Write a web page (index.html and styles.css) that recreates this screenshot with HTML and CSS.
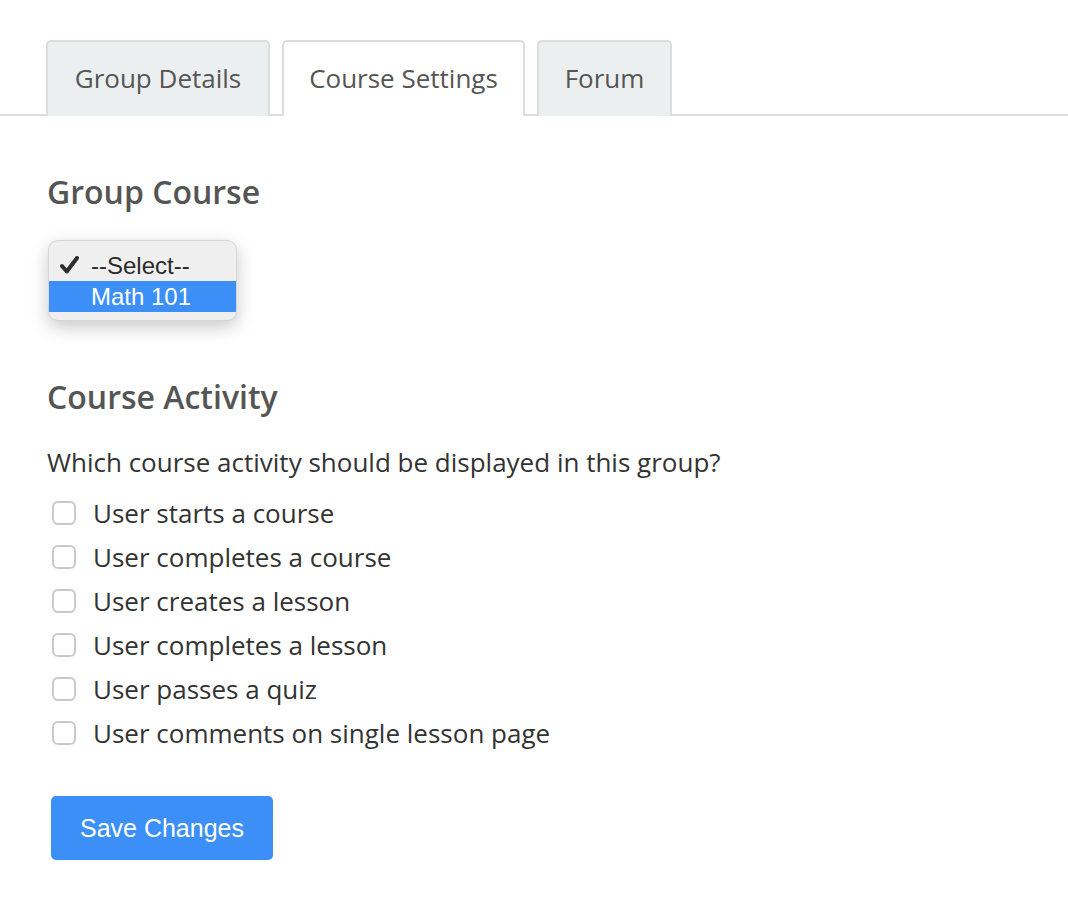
FILE: index.html
```html
<!DOCTYPE html>
<html lang="en">
<head>
<meta charset="utf-8">
<title>Course Settings</title>
<link rel="stylesheet" href="styles.css">
</head>
<body>
<nav class="tabs">
  <div class="tab tab-group">Group Details</div>
  <div class="tab tab-course active">Course Settings</div>
  <div class="tab tab-forum">Forum</div>
</nav>
<main class="content">
  <h2 class="heading">Group Course</h2>
  <div class="dropdown">
    <div class="option selected"><svg class="check" width="19" height="18" viewBox="0 0 19 18"><path d="M2 10 L6.8 15.5 L17 2" fill="none" stroke="#2e2e2e" stroke-width="4" stroke-linecap="round" stroke-linejoin="round"/></svg>--Select--</div>
    <div class="option highlighted">Math 101</div>
  </div>
  <h2 class="heading">Course Activity</h2>
  <p class="question">Which course activity should be displayed in this group?</p>
  <ul class="checklist">
    <li class="item"><span class="box"></span>User starts a course</li>
    <li class="item"><span class="box"></span>User completes a course</li>
    <li class="item"><span class="box"></span>User creates a lesson</li>
    <li class="item"><span class="box"></span>User completes a lesson</li>
    <li class="item"><span class="box"></span>User passes a quiz</li>
    <li class="item"><span class="box"></span>User comments on single lesson page</li>
  </ul>
  <button class="save">Save Changes</button>
</main>
</body>
</html>
```
FILE: styles.css
```css
html, body {
  margin: 0;
  padding: 0;
  background: #fff;
}
body {
  font-family: "Open Sans", "Noto Sans", sans-serif;
  color: #333;
}
.tabs {
  display: flex;
  gap: 12px;
  padding: 40px 0 0 46px;
  border-bottom: 2px solid #dddddd;
  height: 74px;
  box-sizing: content-box;
}
.tab {
  box-sizing: border-box;
  height: 76px;
  border: 2px solid #dddddd;
  border-bottom: none;
  border-radius: 5px 5px 0 0;
  background: #ecefef;
  color: #555;
  font-size: 26px;
  display: flex;
  align-items: center;
  justify-content: center;
  padding-bottom: 2px;
}
.tab-group { width: 224px; }
.tab-course { width: 243px; }
.tab-forum { width: 135px; }
.tab.active {
  background: #fff;
  position: relative;
  z-index: 1;
}
.content {
  padding: 0 0 0 47px;
}
.heading {
  margin: 0;
  font-size: 32px;
  font-weight: 600;
  color: #555;
  line-height: 40px;
  padding-top: 56px;
}
.dropdown {
  margin: 28px 0 0 1px;
  width: 189px;
  height: 81px;
  box-sizing: border-box;
  padding-top: 9px;
  background: #efefef;
  border: 1px solid #d6d6d6;
  border-radius: 10px;
  box-shadow: 0 6px 18px rgba(0, 0, 0, 0.22);
  font-family: "Liberation Sans", Arial, sans-serif;
  font-size: 24px;
  overflow: hidden;
}
.option {
  height: 31px;
  line-height: 31px;
  padding-left: 42px;
  position: relative;
  color: #2b2b2b;
}
.option.highlighted {
  background: #3b8ff7;
  color: #fff;
}
.check {
  position: absolute;
  left: 11px;
  top: 6px;
}
.question {
  margin: 27px 0 0;
  font-size: 26px;
  line-height: 36px;
  color: #333;
}
.checklist {
  list-style: none;
  margin: 11px 0 0;
  padding: 0;
}
.item {
  display: flex;
  align-items: center;
  height: 44px;
  font-size: 26px;
  color: #333;
}
.box {
  width: 24px;
  height: 24px;
  box-sizing: border-box;
  border: 2px solid #c9c9c9;
  border-radius: 6px;
  margin: 0 17px 0 5px;
  background: #fff;
}
.save {
  margin: 41px 0 0 4px;
  width: 222px;
  height: 64px;
  border: none;
  border-radius: 5px;
  background: #3b8ff7;
  color: #fff;
  font-family: "Liberation Sans", Arial, sans-serif;
  font-size: 25px;
  padding: 0;
  cursor: pointer;
}
```
